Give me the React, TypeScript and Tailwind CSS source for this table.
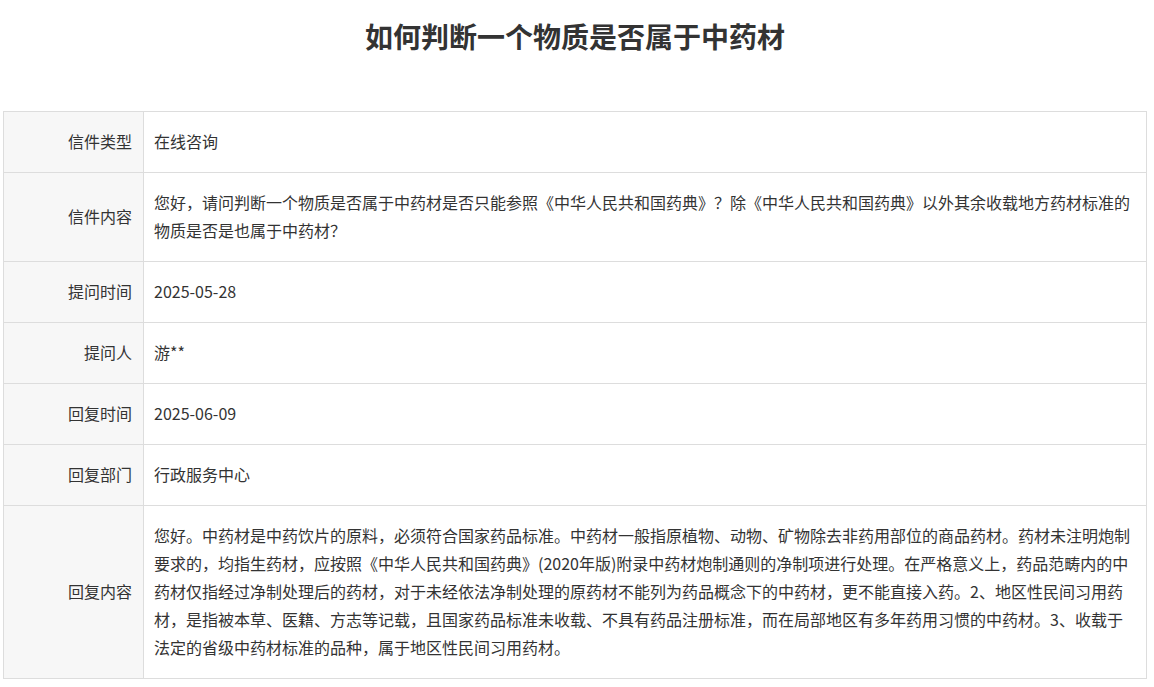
import React from "react";

const font = '"Noto Sans CJK SC", "Microsoft YaHei", sans-serif';

const rows: { label: string; lines: string[] }[] = [
  { label: "信件类型", lines: ["在线咨询"] },
  {
    label: "信件内容",
    lines: [
      "您好，请问判断一个物质是否属于中药材是否只能参照《中华人民共和国药典》？除《中华人民共和国药典》以外其余收载地方药材标准的",
      "物质是否是也属于中药材？",
    ],
  },
  { label: "提问时间", lines: ["2025-05-28"] },
  { label: "提问人", lines: ["游**"] },
  { label: "回复时间", lines: ["2025-06-09"] },
  { label: "回复部门", lines: ["行政服务中心"] },
  {
    label: "回复内容",
    lines: [
      "您好。中药材是中药饮片的原料，必须符合国家药品标准。中药材一般指原植物、动物、矿物除去非药用部位的商品药材。药材未注明炮制",
      "要求的，均指生药材，应按照《中华人民共和国药典》(2020年版)附录中药材炮制通则的净制项进行处理。在严格意义上，药品范畴内的中",
      "药材仅指经过净制处理后的药材，对于未经依法净制处理的原药材不能列为药品概念下的中药材，更不能直接入药。2、地区性民间习用药",
      "材，是指被本草、医籍、方志等记载，且国家药品标准未收载、不具有药品注册标准，而在局部地区有多年药用习惯的中药材。3、收载于",
      "法定的省级中药材标准的品种，属于地区性民间习用药材。",
    ],
  },
];

export default function App() {
  return (
    <div className="min-h-[687px] w-[1154px] bg-white text-[#333]" style={{ fontFamily: font }}>
      <h1 className="pt-[18px] pr-[4px] text-center text-[28px] font-bold leading-[36px] text-[#333]">
        如何判断一个物质是否属于中药材
      </h1>
      <div className="ml-[3px] mt-[57px] w-[1144px]">
        <table className="w-full border-collapse border border-[#dddddd] text-[16px] leading-[28px]">
          <tbody>
            {rows.map((r) => (
              <tr key={r.label}>
                <td className="w-[140px] border border-[#dddddd] bg-[#f7f7f7] pt-[15px] pb-[17px] pr-[11px] text-right align-middle whitespace-nowrap">
                  {r.label}
                </td>
                <td className="border border-[#dddddd] pt-[15px] pb-[17px] pl-[10px] pr-[8px] align-middle">
                  {r.lines.map((l, i) => (
                    <div key={i} className="whitespace-nowrap">
                      {l}
                    </div>
                  ))}
                </td>
              </tr>
            ))}
          </tbody>
        </table>
      </div>
    </div>
  );
}
